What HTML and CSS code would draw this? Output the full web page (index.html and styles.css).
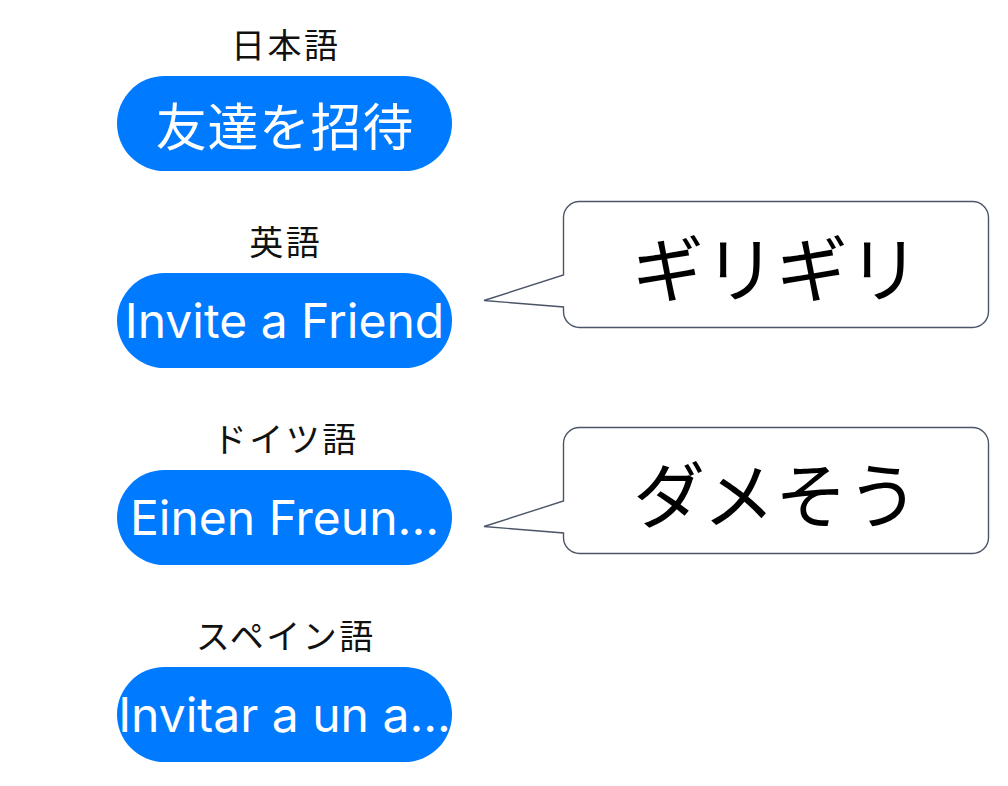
FILE: index.html
```html
<!DOCTYPE html>
<html lang="ja">
<head>
<meta charset="utf-8">
<title>Invite a Friend</title>
<link rel="stylesheet" href="styles.css">
</head>
<body>
<main class="page">
  <section class="list">
    <div class="group">
      <div class="label">日本語</div>
      <div class="button cjk">友達を招待</div>
    </div>
    <div class="group">
      <div class="label">英語</div>
      <div class="button latin">Invite a Friend</div>
    </div>
    <div class="group">
      <div class="label">ドイツ語</div>
      <div class="button latin">Einen Freun...</div>
    </div>
    <div class="group">
      <div class="label">スペイン語</div>
      <div class="button latin">Invitar a un a...</div>
    </div>
  </section>

  <div class="callout callout-1">
    <svg class="bubble" viewBox="0 0 516 140" width="516" height="140" aria-hidden="true">
      <path d="M101.5 6.5 H494.5 A16 16 0 0 1 510.5 22.5 V116.5 A16 16 0 0 1 494.5 132.5 H101.5 A16 16 0 0 1 85.5 116.5 V112 L6 105.5 L85.5 80 V22.5 A16 16 0 0 1 101.5 6.5 Z"/>
    </svg>
    <div class="callout-text">ギリギリ</div>
  </div>
  <div class="callout callout-2">
    <svg class="bubble" viewBox="0 0 516 140" width="516" height="140" aria-hidden="true">
      <path d="M101.5 6.5 H494.5 A16 16 0 0 1 510.5 22.5 V116.5 A16 16 0 0 1 494.5 132.5 H101.5 A16 16 0 0 1 85.5 116.5 V112 L6 105.5 L85.5 80 V22.5 A16 16 0 0 1 101.5 6.5 Z"/>
    </svg>
    <div class="callout-text">ダメそう</div>
  </div>
</main>
</body>
</html>
```

FILE: styles.css
```css
html, body {
  margin: 0;
  padding: 0;
  background: #ffffff;
}

body {
  width: 1008px;
  height: 786px;
  overflow: hidden;
  font-family: "Noto Sans CJK JP", "Noto Sans", sans-serif;
  color: #000000;
}

.page {
  position: relative;
  width: 1008px;
  height: 786px;
}

.list {
  display: flex;
  flex-direction: column;
  width: 335px;
  margin-left: 117px;
  padding-top: 24px;
  gap: 50px;
}

.group {
  display: flex;
  flex-direction: column;
  align-items: center;
  gap: 12px;
}

.label {
  font-size: 34px;
  line-height: 40px;
  height: 40px;
  letter-spacing: 2.5px;
  padding-left: 2.5px;
  color: #111111;
  white-space: nowrap;
}

.button {
  width: 335px;
  height: 95px;
  border-radius: 48px;
  background: #007aff;
  color: #ffffff;
  display: flex;
  align-items: center;
  justify-content: center;
  font-size: 50px;
  white-space: nowrap;
  overflow: hidden;
}

.button.cjk {
  font-size: 51px;
  letter-spacing: 0.6px;
  padding-left: 0.6px;
  box-sizing: border-box;
}

.button.latin {
  font-family: "Inter", "Noto Sans", sans-serif;
  font-size: 48px;
}

.callout {
  position: absolute;
  left: 478px;
  width: 516px;
  height: 140px;
}

.callout-1 { top: 195px; }
.callout-2 { top: 421px; }

.bubble {
  position: absolute;
  left: 0;
  top: 0;
}

.bubble path {
  fill: #ffffff;
  stroke: #4b5569;
  stroke-width: 1.4;
  stroke-linejoin: miter;
}

.callout-text {
  position: absolute;
  left: 86px;
  top: 7px;
  width: 424px;
  height: 125px;
  display: flex;
  align-items: center;
  justify-content: center;
  font-size: 72px;
  white-space: nowrap;
}
```
